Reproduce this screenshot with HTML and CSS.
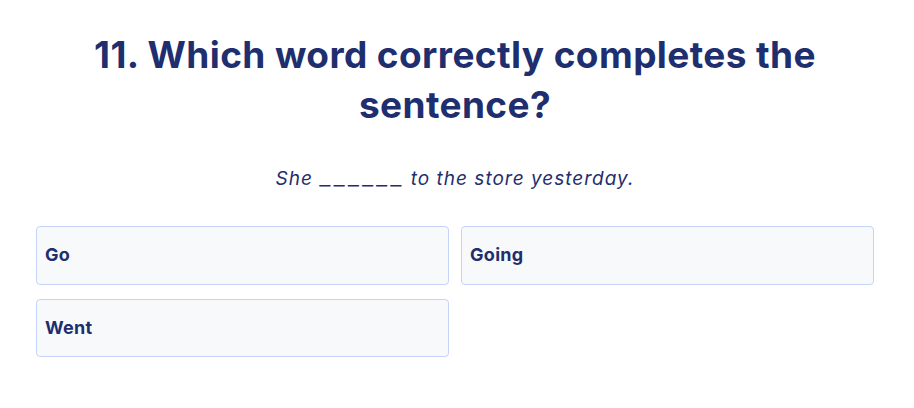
FILE: index.html
```html
<!DOCTYPE html>
<html lang="en">
<head>
<meta charset="utf-8">
<title>Question 11</title>
<link rel="stylesheet" href="styles.css">
</head>
<body>
<main class="quiz">
  <h1 class="question">11. Which word correctly completes the sentence?</h1>
  <p class="prompt">She <span class="blank">______</span> to the store yesterday.</p>
  <div class="options">
    <button class="option" type="button">Go</button>
    <button class="option" type="button">Going</button>
    <button class="option" type="button">Went</button>
  </div>
</main>
</body>
</html>
```

FILE: styles.css
```css
html, body {
  margin: 0;
  padding: 0;
  background: #ffffff;
}

body {
  font-family: Inter, "Noto Sans", Roboto, sans-serif;
  color: #1e2e6e;
}

.quiz {
  width: 838px;
  margin-left: 36px;
  padding-top: 30px;
}

.question {
  margin: 0;
  text-align: center;
  font-size: 37px;
  line-height: 50px;
  font-weight: 700;
  letter-spacing: 0.4px;
  color: #1e2e6e;
}

.prompt {
  margin: 37px 0 0;
  text-align: center;
  font-size: 19px;
  line-height: 24px;
  font-style: italic;
  letter-spacing: 1px;
  color: #1e2e6e;
}

.blank {
  font-size: 25px;
  font-weight: 300;
  line-height: 0;
  letter-spacing: 3px;
  font-style: normal;
}

.options {
  margin-top: 35px;
  display: grid;
  grid-template-columns: 1fr 1fr;
  column-gap: 12px;
  row-gap: 14px;
}

.option {
  display: block;
  text-align: left;
  font-family: Inter, "Noto Sans", Roboto, sans-serif;
  font-size: 18px;
  font-weight: 700;
  letter-spacing: 0.3px;
  line-height: 24.5px;
  color: #1e2e6e;
  background: #f8f9fb;
  border: 1px solid #c5d3fb;
  border-radius: 4px;
  padding: 16px 8px;
  margin: 0;
}
```
